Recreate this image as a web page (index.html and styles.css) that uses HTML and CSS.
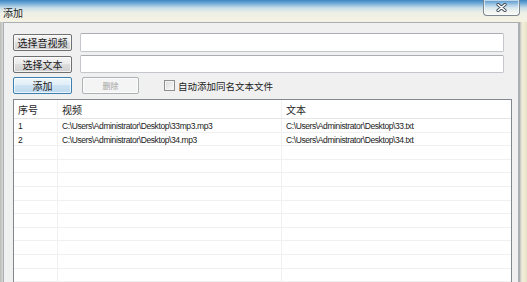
FILE: index.html
```html
<!DOCTYPE html>
<html>
<head>
	<meta charset="utf-8">
	<title>添加</title>
	<link rel="stylesheet" href="styles.css">
</head>
<body>
	<div class="window">
		<div class="titlebar">
			<span class="title">添加</span>
			<span class="close">
				<svg width="11" height="9" viewBox="0 0 11 9">
					<path d="M2 1.5 L9 7.5 M9 1.5 L2 7.5" stroke="#3b4652" stroke-width="3.2" stroke-linecap="round"/>
					<path d="M2 1.5 L9 7.5 M9 1.5 L2 7.5" stroke="#ffffff" stroke-width="1.6" stroke-linecap="round"/>
				</svg>
			</span>
		</div>
		<div class="frame">
			<div class="edge-left"></div>
			<div class="panel">
				<div class="row row1">
					<button class="btn">选择音视频</button>
					<input class="field" type="text">
				</div>
				<div class="row row2">
					<button class="btn">选择文本</button>
					<input class="field" type="text">
				</div>
				<div class="row row3">
					<button class="btn focus">添加</button>
					<button class="btn disabled">删除</button>
					<label class="check"><span class="box"></span>自动添加同名文本文件</label>
				</div>
				<div class="list">
					<div class="head">
						<div class="c1">序号</div>
						<div class="c2">视频</div>
						<div class="c3">文本</div>
					</div>
					<div class="item"><div class="c1">1</div><div class="c2">C:\Users\Administrator\Desktop\33mp3.mp3</div><div class="c3">C:\Users\Administrator\Desktop\33.txt</div></div>
					<div class="item"><div class="c1">2</div><div class="c2">C:\Users\Administrator\Desktop\34.mp3</div><div class="c3">C:\Users\Administrator\Desktop\34.txt</div></div>
					<div class="item"><div class="c1"></div><div class="c2"></div><div class="c3"></div></div>
					<div class="item"><div class="c1"></div><div class="c2"></div><div class="c3"></div></div>
					<div class="item"><div class="c1"></div><div class="c2"></div><div class="c3"></div></div>
					<div class="item"><div class="c1"></div><div class="c2"></div><div class="c3"></div></div>
					<div class="item"><div class="c1"></div><div class="c2"></div><div class="c3"></div></div>
					<div class="item"><div class="c1"></div><div class="c2"></div><div class="c3"></div></div>
					<div class="item"><div class="c1"></div><div class="c2"></div><div class="c3"></div></div>
					<div class="item"><div class="c1"></div><div class="c2"></div><div class="c3"></div></div>
					<div class="item"><div class="c1"></div><div class="c2"></div><div class="c3"></div></div>
					<div class="item"><div class="c1"></div><div class="c2"></div><div class="c3"></div></div>
					<div class="item"><div class="c1"></div><div class="c2"></div><div class="c3"></div></div>
				</div>
			</div>
			<div class="edge-right"></div>
		</div>
	</div>
</body>
</html>
```

FILE: styles.css
```css
*{
	margin: 0;
	padding: 0;
	box-sizing: border-box;
}
body{
	width: 527px;
	height: 282px;
	overflow: hidden;
	background: #e9e7dc;
	font-family: "Liberation Sans", "Noto Sans CJK SC", sans-serif;
	color: #1c1c1c;
}
.window{
	display: flex;
	flex-direction: column;
	height: 282px;
}
.titlebar{
	height: 22px;
	display: flex;
	justify-content: space-between;
	align-items: flex-start;
	background: linear-gradient(to bottom, #3d86c2 0, #6aa6d6 3px, #c9dfe9 8px, #eef0e6 13px, #f5f2e2 22px);
}
.title{
	font-family: "Noto Sans CJK SC", sans-serif;
	font-size: 10px;
	line-height: 12px;
	margin: 7px 0 0 3px;
	color: #222;
}
.close{
	width: 37px;
	height: 16px;
	margin-right: 7px;
	border: 1px solid #7d8790;
	border-top: none;
	border-radius: 0 0 4px 4px;
	background: linear-gradient(to bottom, rgba(255,255,255,0.1), rgba(255,255,255,0.5));
	box-shadow: inset 0 0 0 1px rgba(255,255,255,0.6);
	display: flex;
	align-items: center;
	justify-content: center;
}
.frame{
	flex: 1;
	display: flex;
	min-height: 0;
}
.edge-left{
	width: 3px;
	background: linear-gradient(to right, #b9bcbb, #d8d8d0);
}
.edge-right{
	width: 8px;
	background: linear-gradient(to right, #9aa0a4 0, #dcdcd2 2px, #f3efd8 4px, #e6e2c8 8px);
}
.panel{
	flex: 1;
	background: #f0f0f0;
	border-top: 1px solid #a9afb5;
	border-left: 1px solid #a9afb5;
	border-right: 1px solid #a9afb5;
	padding: 10px 0 0 9px;
	display: flex;
	flex-direction: column;
	min-height: 0;
}
.row{
	display: flex;
	align-items: center;
}
.row1{
	height: 19px;
}
.row2{
	height: 18px;
	margin-top: 3px;
}
.row3{
	height: 17px;
	margin-top: 4px;
}
.btn{
	width: 59px;
	height: 17px;
	border: 1px solid #707070;
	border-radius: 2px;
	background: linear-gradient(to bottom, #f4f4f4 0, #ebebeb 45%, #dddddd 50%, #cfcfcf 100%);
	box-shadow: inset 0 0 0 1px rgba(255,255,255,0.7);
	font-family: "Noto Sans CJK SC", sans-serif;
	font-size: 10px;
	line-height: 13px;
	color: #1a1a1a;
}
.btn.focus{
	border-color: #3c7fb1;
	background: linear-gradient(to bottom, #eef6fb 0, #e0eef8 45%, #cde3f2 50%, #bcd9ee 100%);
}
.btn.disabled{
	width: 57px;
	margin-left: 10px;
	border-color: #adb2b5;
	background: #f4f4f4;
	color: #a3a3a3;
	font-size: 8px;
}
.field{
	width: 424px;
	height: 100%;
	margin-left: 8px;
	border: 1px solid #c3c6ca;
	border-top-color: #abadb3;
	border-radius: 2px;
	background: #fff;
}
.check{
	display: flex;
	align-items: center;
	margin-left: 25px;
	font-family: "Noto Sans CJK SC", sans-serif;
	font-size: 9.5px;
	color: #1c1c1c;
}
.box{
	width: 11px;
	height: 11px;
	margin-right: 3px;
	border: 1px solid #8e8f8f;
	background: linear-gradient(135deg, #dcdcdc, #fafafa);
	box-shadow: inset 0 0 0 1px #f4f4f4;
}
.list{
	width: 499px;
	flex: 1;
	margin-top: 5px;
	border: 1px solid #828790;
	border-bottom: none;
	background: #fff;
	overflow: hidden;
}
.head{
	display: flex;
	height: 19px;
	border-bottom: 1px solid #e5e5e5;
	font-family: "Noto Sans CJK SC", sans-serif;
	font-size: 10px;
	line-height: 19px;
	color: #1e1e1e;
}
.head div{
	padding-left: 4px;
	border-right: 1px solid #f2f2f2;
}
.item{
	display: flex;
	height: 13.6px;
	border-bottom: 1px solid #f0f0f0;
	font-size: 8.5px;
	line-height: 14px;
	letter-spacing: -0.4px;
	color: #222;
}
.item div{
	padding-left: 4px;
	border-right: 1px solid #f0f0f0;
	white-space: nowrap;
	overflow: hidden;
}
.c1{
	width: 44px;
}
.c2{
	width: 224px;
}
.c3{
	flex: 1;
	border-right: none !important;
}
```
